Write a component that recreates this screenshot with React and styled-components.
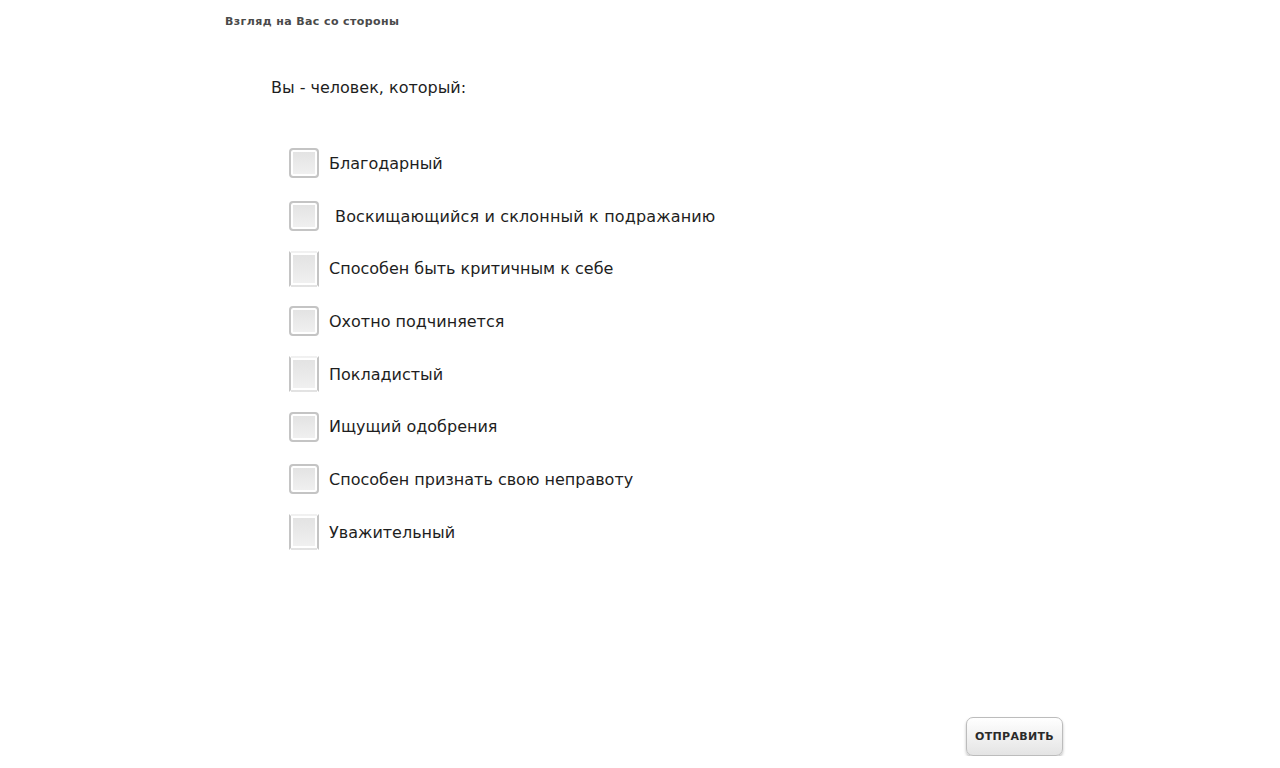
import styled, { createGlobalStyle } from "styled-components";

const GlobalStyle = createGlobalStyle`
  html, body {
    margin: 0;
    padding: 0;
    background: #fff;
  }
  body {
    font-family: "DejaVu Sans", Verdana, sans-serif;
  }
`;

const items = [
  { label: "Благодарный" },
  { label: "Воскищающийся и склонный к подражанию", pad: true },
  { label: "Способен быть критичным к себе", clipped: true },
  { label: "Охотно подчиняется" },
  { label: "Покладистый", clipped: true },
  { label: "Ищущий одобрения" },
  { label: "Способен признать свою неправоту" },
  { label: "Уважительный", clipped: true },
];

const App = () => {
  return (
    <StPage>
      <GlobalStyle />
      <Title>Взгляд на Вас со стороны</Title>
      <Question>Вы - человек, который:</Question>
      <List>
        {items.map((item, i) => (
          <Row key={i}>
            <Box $clipped={item.clipped} />
            <Label $pad={item.pad}>{item.label}</Label>
          </Row>
        ))}
      </List>
      <Footer>
        <SendButton type="button">ОТПРАВИТЬ</SendButton>
      </Footer>
    </StPage>
  );
};

export default App;

const StPage = styled.div`
  width: 838px;
  padding: 15px 0 0 225px;
  display: flex;
  flex-direction: column;
`;

const Title = styled.div`
  font-size: 11px;
  font-weight: bold;
  color: #4a4a4a;
  line-height: 14px;
  letter-spacing: 0.4px;
`;

const Question = styled.div`
  margin: 49px 0 0 46px;
  font-size: 16px;
  color: #1e1e1e;
  line-height: 20px;
`;

const List = styled.div`
  margin: 39px 0 0 64px;
  display: flex;
  flex-direction: column;
`;

const Row = styled.div`
  height: 52.7px;
  display: flex;
  align-items: center;
  gap: 10px;
`;

const Box = styled.div`
  width: 26px;
  height: ${(p) => (p.$clipped ? "32px" : "26px")};
  border: 2px solid #c4c4c4;
  border-top-color: ${(p) => (p.$clipped ? "transparent" : "#c4c4c4")};
  border-bottom-color: ${(p) => (p.$clipped ? "transparent" : "#c4c4c4")};
  border-radius: ${(p) => (p.$clipped ? "0" : "4px")};
  box-shadow: inset 0 0 0 2px #fff;
  background: linear-gradient(#e2e2e2, #f1f1f1);
  flex-shrink: 0;
`;

const Label = styled.span`
  padding-left: ${(p) => (p.$pad ? "6px" : "0")};
  font-size: 16px;
  color: #1e1e1e;
  letter-spacing: ${(p) => (p.$pad ? "0.15px" : "0")};
  white-space: pre;
`;

const Footer = styled.div`
  margin-top: 158px;
  display: flex;
  justify-content: flex-end;
`;

const SendButton = styled.button`
  width: 97px;
  height: 39px;
  border: 1px solid #bcbcbc;
  border-radius: 7px;
  background: linear-gradient(#ffffff, #e4e4e4);
  box-shadow: 0 2px 3px rgba(0, 0, 0, 0.25);
  font-family: "DejaVu Sans", Verdana, sans-serif;
  font-size: 11px;
  font-weight: bold;
  color: #2a2a2a;
  letter-spacing: 0.3px;
  padding: 0;
`;
